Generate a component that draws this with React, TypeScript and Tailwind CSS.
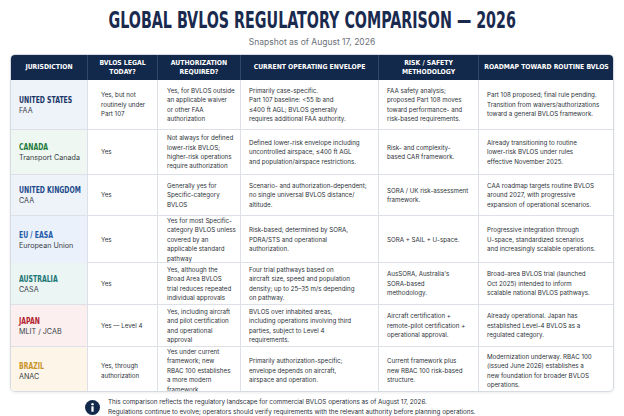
const cond = "font-['DejaVu_Sans_Condensed','Liberation_Sans_Narrow',sans-serif]"

type Row = {
  name: string
  sub: string
  color: string
  bg: string
  h: string
  cells: string[][]
}

const rows: Row[] = [
  {
    name: 'UNITED STATES',
    sub: 'FAA',
    color: 'text-[#1b3667]',
    bg: 'bg-[#eef3fa]',
    h: 'h-[50px]',
    cells: [
      ['Yes, but not', 'routinely under', 'Part 107'],
      ['Yes, for BVLOS outside', 'an applicable waiver', 'or other FAA', 'authorization'],
      ['Primarily case-specific.', 'Part 107 baseline:  <55 lb and', '≤400 ft AGL; BVLOS generally', 'requires additional FAA authority.'],
      ['FAA safety analysis;', 'proposed Part 108 moves', 'toward performance- and', 'risk-based requirements.'],
      ['Part 108 proposed; final rule pending.', 'Transition from waivers/authorizations', 'toward a general BVLOS framework.'],
    ],
  },
  {
    name: 'CANADA',
    sub: 'Transport Canada',
    color: 'text-[#1f7a3c]',
    bg: 'bg-[#eef7f1]',
    h: 'h-[45px]',
    cells: [
      ['Yes'],
      ['Not always for defined', 'lower-risk BVLOS;', 'higher-risk operations', 'require authorization'],
      ['Defined lower-risk envelope including', 'uncontrolled airspace, ≤400 ft AGL', 'and population/airspace restrictions.'],
      ['Risk- and complexity-', 'based CAR framework.'],
      ['Already transitioning to routine', 'lower-risk BVLOS under rules', 'effective November 2025.'],
    ],
  },
  {
    name: 'UNITED KINGDOM',
    sub: 'CAA',
    color: 'text-[#1d4a8a]',
    bg: 'bg-[#eef3fa]',
    h: 'h-[41px]',
    cells: [
      ['Yes'],
      ['Generally yes for', 'Specific-category', 'BVLOS'],
      ['Scenario- and authorization-dependent;', 'no single universal BVLOS distance/', 'altitude.'],
      ['SORA / UK risk-assessment', 'framework.'],
      ['CAA roadmap targets routine BVLOS', 'around 2027, with progressive', 'expansion of operational scenarios.'],
    ],
  },
  {
    name: 'EU / EASA',
    sub: 'European Union',
    color: 'text-[#1d5aa8]',
    bg: 'bg-[#eaf1fb]',
    h: 'h-[47px]',
    cells: [
      ['Yes'],
      ['Yes for most Specific-', 'category BVLOS unless', 'covered by an', 'applicable standard', 'pathway'],
      ['Risk-based; determined by SORA,', 'PDRA/STS and operational', 'authorization.'],
      ['SORA + SAIL + U-space.'],
      ['Progressive integration through', 'U-space, standardized scenarios', 'and increasingly scalable operations.'],
    ],
  },
  {
    name: 'AUSTRALIA',
    sub: 'CASA',
    color: 'text-[#1c7573]',
    bg: 'bg-[#eaf5f4]',
    h: 'h-[42px]',
    cells: [
      ['Yes'],
      ['Yes, although the', 'Broad Area BVLOS', 'trial reduces repeated', 'individual approvals'],
      ['Four trial pathways based on', 'aircraft size, speed and population', 'density; up to 25–35 m/s depending', 'on pathway.'],
      ["AusSORA, Australia's", 'SORA-based', 'methodology.'],
      ['Broad-area BVLOS trial (launched', 'Oct 2025) intended to inform', 'scalable national BVLOS pathways.'],
    ],
  },
  {
    name: 'JAPAN',
    sub: 'MLIT / JCAB',
    color: 'text-[#b3232e]',
    bg: 'bg-[#fbeff0]',
    h: 'h-[42px]',
    cells: [
      ['Yes — Level 4'],
      ['Yes, including aircraft', 'and pilot certification', 'and operational', 'approval'],
      ['BVLOS over inhabited areas,', 'including operations involving third', 'parties, subject to Level 4', 'requirements.'],
      ['Aircraft certification +', 'remote-pilot certification +', 'operational approval.'],
      ['Already operational. Japan has', 'established Level-4 BVLOS as a', 'regulated category.'],
    ],
  },
  {
    name: 'BRAZIL',
    sub: 'ANAC',
    color: 'text-[#c9932a]',
    bg: 'bg-[#fdf6e8]',
    h: 'h-[44px]',
    cells: [
      ['Yes, through', 'authorization'],
      ['Yes under current', 'framework; new', 'RBAC 100 establishes', 'a more modern', 'framework'],
      ['Primarily authorization-specific;', 'envelope depends on aircraft,', 'airspace and operation.'],
      ['Current framework plus', 'new RBAC 100 risk-based', 'structure.'],
      ['Modernization underway. RBAC 100', '(issued June 2026) establishes a', 'new foundation for broader BVLOS', 'operations.'],
    ],
  },
]

const headers = [
  ['JURISDICTION'],
  ['BVLOS LEGAL', 'TODAY?'],
  ['AUTHORIZATION', 'REQUIRED?'],
  ['CURRENT OPERATING ENVELOPE'],
  ['RISK / SAFETY', 'METHODOLOGY'],
  ['ROADMAP TOWARD ROUTINE BVLOS'],
]

const cols = 'grid grid-cols-[77px_70px_83px_138px_100px_135px]'
const pads = ['pl-[13px]', 'pl-[9px]', 'pl-[8px]', 'pl-[8px]', 'pl-[8px]']

export default function App() {
  return (
    <div className="w-[624px] h-[416px] bg-white overflow-hidden font-['Inter',sans-serif]">
      <div className="pt-[8px] text-center">
        <h1 className={`inline-block scale-x-[0.69] text-[23px] leading-[24px] font-bold text-[#1a2a4f] whitespace-nowrap ${cond}`}>
          GLOBAL BVLOS REGULATORY COMPARISON — 2026
        </h1>
        <p className="mt-[3px] text-[8.5px] leading-[10px] text-[#6b7079]">Snapshot as of August 17, 2026</p>
      </div>

      <div className="mx-[10px] mt-[7px] w-[604px] rounded-[5px] border border-[#d6dbe2] shadow-[0_1px_3px_rgba(0,0,0,0.08)] overflow-hidden">
        <div className={`${cols} h-[25px] bg-[#13294b] text-white ${cond}`}>
          {headers.map((h, i) => (
            <div
              key={i}
              className={`flex flex-col items-center justify-center text-center text-[6.8px] leading-[8.5px] font-bold ${i < 5 ? 'border-r border-[#33486d]' : ''}`}
            >
              {h.map((l) => (
                <span key={l} className="whitespace-nowrap">{l}</span>
              ))}
            </div>
          ))}
        </div>

        {rows.map((r, ri) => (
          <div key={r.name} className={`${cols} ${r.h} ${ri < rows.length - 1 ? 'border-b border-[#dde1e7]' : ''}`}>
            <div className={`${r.bg} border-r border-[#dde1e7] pl-[8px] flex flex-col justify-center overflow-hidden`}>
              <span className={`inline-block origin-left scale-x-[0.72] whitespace-nowrap text-[9.5px] leading-[12px] font-bold ${r.color} ${cond}`}>
                {r.name}
              </span>
              <span className="text-[7.2px] leading-[10px] text-[#3a3f47] whitespace-nowrap">{r.sub}</span>
            </div>
            {r.cells.map((c, ci) => (
              <div
                key={ci}
                className={`flex flex-col justify-center ${pads[ci]} text-[6.2px] leading-[9.4px] text-[#2c3038] ${ci < 4 ? 'border-r border-[#dde1e7]' : ''}`}
              >
                {c.map((l, li) => (
                  <span key={li} className="whitespace-nowrap">{l}</span>
                ))}
              </div>
            ))}
          </div>
        ))}
      </div>

      <div className="flex items-center gap-[8px] pl-[85px] mt-[6px]">
        <svg width="15" height="15" viewBox="0 0 16 16" className="shrink-0">
          <circle cx="8" cy="8" r="8" fill="#13294b" />
          <circle cx="8" cy="4.4" r="1.3" fill="#fff" />
          <rect x="6.8" y="6.6" width="2.4" height="6" rx="0.6" fill="#fff" />
        </svg>
        <div className="text-[6.3px] leading-[9.5px] text-[#2c3038]">
          <div className="whitespace-nowrap">This comparison reflects the regulatory landscape for commercial BVLOS operations as of August 17, 2026.</div>
          <div className="whitespace-nowrap">Regulations continue to evolve; operators should verify requirements with the relevant authority before planning operations.</div>
        </div>
      </div>
    </div>
  )
}
